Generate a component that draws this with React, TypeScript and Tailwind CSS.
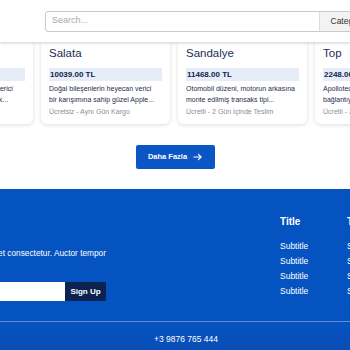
const products = [
  { name: "Kalem", price: "4120.00 TL", line1: "Ergonomik tasarımı ile çok verici", line2: "kullanım rahatlığı sağlayacak...", ship: "Ücretsiz - Aynı Gün Kargo" },
  { name: "Salata", price: "10039.00 TL", line1: "Doğal bileşenlerin heyecan verici", line2: "bir karışımına sahip güzel Apple...", ship: "Ücretsiz - Aynı Gün Kargo" },
  { name: "Sandalye", price: "11468.00 TL", line1: "Otomobil düzeni, motorun arkasına", line2: "monte edilmiş transaks tipi...", ship: "Ücretli - 2 Gün İçinde Teslim" },
  { name: "Top", price: "2248.00 TL", line1: "Apollotech B340, güvenilir", line2: "bağlantıya sahip uygun fiyatlı...", ship: "Ücretli - 2 Gün İçinde Teslim" },
];

function ProductCard({ p }: { p: (typeof products)[number] }) {
  return (
    <div className="w-[129px] shrink-0 rounded-b-md bg-white px-[8px] pt-[4px] pb-[7px] shadow-[0_1px_4px_rgba(0,0,0,0.14)]">
      <h3 className="text-[11.5px] leading-[14px] text-[#1c2e55]">{p.name}</h3>
      <div className="mt-[8px] h-[13px] bg-[#e6edf8] px-[1px] text-[8px] leading-[13px] font-semibold text-[#0e2350]">{p.price}</div>
      <div className="mt-[2px] text-[7px] leading-[11px] text-[#1f2d4d]">
        <p className="truncate">{p.line1}</p>
        <p className="truncate">{p.line2}</p>
      </div>
      <p className="mt-[2px] truncate text-[7px] leading-[10px] text-[#8a8f99]">{p.ship}</p>
    </div>
  );
}

export default function App() {
  return (
    <div className="w-[350px] h-[350px] overflow-hidden bg-white font-['Liberation_Sans',Arial,sans-serif]">
      <header className="relative z-10 flex h-[42px] items-center bg-white pl-[45px] shadow-[0_1px_3px_rgba(0,0,0,0.2)]">
        <div className="flex h-[21px] w-[332px] shrink-0 overflow-hidden rounded-[3px] border border-[#c9c9c9]">
          <input className="min-w-0 flex-1 px-[6px] text-[9px] outline-none placeholder:text-[#a8a8a8]" placeholder="Search..." />
          <div className="flex items-center border-l border-[#dcdcdc] bg-[#f3f3f3] px-[11px] text-[8.5px] text-[#333]">Category</div>
        </div>
      </header>

      <div className="ml-[-96px] flex gap-[8px]">
        {products.map((p) => (
          <ProductCard key={p.name} p={p} />
        ))}
      </div>

      <div className="flex justify-center pt-[21px] pb-[20px]">
        <button className="flex h-[24px] w-[79px] items-center justify-center gap-[6px] rounded-[2px] bg-[#0a56c4] text-[7.5px] font-semibold text-white">
          Daha Fazla
          <svg width="9" height="8" viewBox="0 0 10 8" fill="none" stroke="white" strokeWidth="1.3" strokeLinecap="round" strokeLinejoin="round">
            <path d="M1 4h8M6 1l3 3-3 3" />
          </svg>
        </button>
      </div>

      <footer className="bg-gradient-to-b from-[#0553c1] from-75% to-[#0a4bb0] text-white">
        <div className="flex pt-[26px] pb-[20px]">
          <div className="flex w-[106px] shrink-0 flex-col items-end pt-[33px]">
            <p className="text-[8.3px] leading-[11px] whitespace-nowrap">Lorem ipsum dolor sit amet consectetur. Auctor tempor</p>
            <div className="mt-[23px] flex h-[19px] shrink-0">
              <input className="h-full w-[160px] bg-white px-2 text-[8px] text-black outline-none" />
              <button className="h-full w-[41px] bg-[#0c2352] text-[8px] font-semibold">Sign Up</button>
            </div>
          </div>
          <div className="ml-[174px] flex gap-[39px]">
            {[0, 1].map((c) => (
              <div key={c} className="w-[28px] shrink-0">
                <h4 className="text-[10px] leading-[14px] font-bold">Title</h4>
                <ul className="mt-[12px] flex flex-col gap-[4px] text-[8.5px] leading-[11px]">
                  <li>Subtitle</li>
                  <li>Subtitle</li>
                  <li>Subtitle</li>
                  <li>Subtitle</li>
                </ul>
              </div>
            ))}
          </div>
        </div>
        <div className="border-t border-[#5a8ad8] pt-[11px] pb-[20px] pl-[22px] text-center text-[8.5px] leading-[12px]">+3 9876 765 444</div>
      </footer>
    </div>
  );
}
